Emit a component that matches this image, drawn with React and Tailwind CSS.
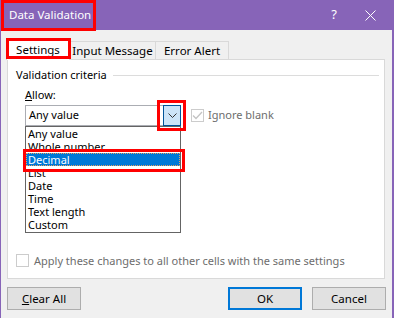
import React from "react";

const items = ["Any value", "Whole number", "Decimal", "List", "Date", "Time", "Text length", "Custom"];

function App() {
  return (
    <div
      className="relative w-[394px] h-[318px] overflow-hidden bg-[#f0f0f0] border-l border-r-2 border-[#8764b8] text-[11px] text-black"
      style={{ fontFamily: '"Noto Sans", "Open Sans", sans-serif' }}
    >
      {/* title bar */}
      <div className="h-[30px] bg-[#8764b8] flex items-center text-white">
        <span className="pl-[8px] text-[11.5px]">Data Validation</span>
        <span className="ml-auto w-[20px] text-center text-[13px]">?</span>
        <span className="w-[44px] ml-[4px] flex justify-center">
          <svg width="11" height="11" viewBox="0 0 11 11">
            <path d="M0.5 0.5 L10.5 10.5 M10.5 0.5 L0.5 10.5" stroke="white" strokeWidth="1" />
          </svg>
        </span>
      </div>

      {/* tabs */}
      <div className="flex items-end h-[29px] pl-[5px]">
        <div className="h-[21px] w-[64px] bg-white border border-b-0 border-[#d9d9d9] flex items-center justify-center relative top-[1px] z-10 text-[11.5px]">
          Settings
        </div>
        <div className="h-[18px] w-[86px] border border-b-0 border-l-0 border-[#d9d9d9] flex items-center justify-center text-[11.5px]">
          Input Message
        </div>
        <div className="h-[18px] w-[73px] border border-b-0 border-l-0 border-[#d9d9d9] flex items-center justify-center text-[11.5px]">
          Error Alert
        </div>
      </div>

      {/* panel */}
      <div className="ml-[6px] w-[378px] h-[220px] bg-white border border-[#d9d9d9] flex flex-col">
        <div className="flex items-center mt-[7px] pl-[8px] pr-[5px] h-[16px]">
          <span>Validation criteria</span>
          <div className="flex-1 ml-[6px] h-px bg-[#dcdcdc]" />
        </div>
        <div className="pl-[17px] mt-[4px] h-[16px] leading-[16px]">
          <span className="underline">A</span>llow:
        </div>
        <div className="flex items-center pl-[17px] mt-[2px]">
          <div className="relative w-[156px] h-[21px] border border-[#abadb3] flex items-center">
            <span className="pl-[3px]">Any value</span>
            <div className="ml-auto mr-[-1px] w-[18px] h-[21px] border border-[#005499] bg-[#cce4f7] flex items-center justify-center">
              <svg width="9" height="5" viewBox="0 0 9 5">
                <path d="M0.5 0.5 L4.5 4.5 L8.5 0.5" fill="none" stroke="#333" strokeWidth="1" />
              </svg>
            </div>
            {/* dropdown list */}
            <div className="absolute left-[-1px] top-[20px] w-[156px] h-[107px] bg-white border border-[#646464] z-20 flex flex-col">
              {items.map((it) =>
                it === "Decimal" ? (
                  <div key={it} className="h-[13px] leading-[11px] bg-[#0078d7] text-white border border-dotted border-[#e8a060] pl-[1px]">
                    {it}
                  </div>
                ) : (
                  <div key={it} className="h-[13px] leading-[13px] pl-[2px]">
                    {it}
                  </div>
                )
              )}
            </div>
          </div>
          <div className="ml-[10px] w-[13px] h-[13px] border border-[#cccccc] flex items-center justify-center">
            <svg width="11" height="9" viewBox="0 0 11 9">
              <path d="M1 4.5 L4 7.5 L10 1" fill="none" stroke="#c4c4c4" strokeWidth="1.3" />
            </svg>
          </div>
          <span className="ml-[4px] text-[#6d6d6d]">Ignore blank</span>
        </div>

        <div className="mt-auto mb-[9px] flex items-center pl-[8px]">
          <div className="w-[13px] h-[13px] border border-[#cccccc]" />
          <span className="ml-[5px] text-[#6d6d6d]">Apply these changes to all other cells with the same settings</span>
        </div>
      </div>

      {/* buttons */}
      <div className="flex items-center mt-[8px] pl-[6px] pr-[6px]">
        <button className="w-[74px] h-[23px] bg-[#e1e1e1] border border-[#adadad] text-[11.5px]">
          <span className="underline">C</span>lear All
        </button>
        <button className="ml-auto w-[74px] h-[23px] bg-[#e1e1e1] border-2 border-[#0078d7] text-[11.5px]">
          OK
        </button>
        <button className="ml-[10px] w-[74px] h-[23px] bg-[#e1e1e1] border border-[#adadad] text-[11.5px]">
          Cancel
        </button>
      </div>

      {/* red annotation boxes */}
      <div className="absolute left-0 top-0 w-[95px] h-[31px] border-[3px] border-[#ff0000] z-30" />
      <div className="absolute left-[5px] top-[38px] w-[65px] h-[21px] border-[3px] border-[#ff0000] z-30" />
      <div className="absolute left-[156px] top-[100px] w-[29px] h-[31px] border-[3px] border-[#ff0000] z-30" />
      <div className="absolute left-[22px] top-[149px] w-[162px] h-[23px] border-[3px] border-[#ff0000] z-30" />
    </div>
  );
}

export default App;
